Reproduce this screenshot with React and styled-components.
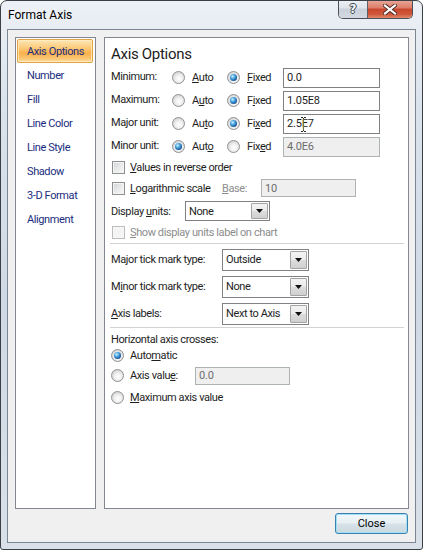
import React from 'react';
import styled, { createGlobalStyle, css } from 'styled-components';

const Global = createGlobalStyle`
  html, body { margin: 0; padding: 0; background: #ffffff; }
  body {
    font-family: Roboto, "Liberation Sans", Arial, sans-serif;
    font-size: 11px;
    letter-spacing: -0.4px;
    color: #1e1e1e;
  }
  * { box-sizing: border-box; }
`;

const Window = styled.div`
  width: 423px;
  height: 550px;
  border: 1px solid #3b3f46;
  border-radius: 7px 7px 3px 3px;
  background: linear-gradient(180deg, #edf1f6 0%, #dbe3ec 18%, #cfd9e5 55%, #d9e0e8 100%);
  display: flex;
  flex-direction: column;
  overflow: hidden;
`;

const TitleBar = styled.div`
  height: 28px;
  flex: none;
  display: flex;
  align-items: flex-start;
  padding-left: 7px;
`;

const Title = styled.div`
  margin-top: 6px;
  font-size: 12px;
  line-height: 16px;
  letter-spacing: 0;
  color: #000;
  text-shadow: 0 0 6px rgba(255, 255, 255, 0.9);
`;

const Caption = styled.div`
  margin-left: auto;
  margin-right: 9px;
  margin-top: -1px;
  display: flex;
  height: 19px;
  border: 1px solid #4a515c;
  border-top: none;
  border-radius: 0 0 5px 5px;
  overflow: hidden;
`;

const CapButton = styled.div`
  width: ${p => p.$w}px;
  height: 100%;
  display: flex;
  align-items: center;
  justify-content: center;
  ${p => p.$close ? css`
    background: linear-gradient(180deg, #e9a99b 0%, #db7c67 45%, #c8452c 50%, #d0583c 80%, #e08a6a 100%);
  ` : css`
    background: linear-gradient(180deg, #eef1f5 0%, #dfe4ea 45%, #c9d0d9 50%, #d3d9e1 100%);
    border-right: 1px solid #5a616b;
  `}
`;

const HelpGlyph = styled.span`
  font-family: "DejaVu Sans", sans-serif;
  font-weight: bold;
  font-size: 12px;
  line-height: 12px;
  color: #f4f6f8;
  letter-spacing: 0;
  text-shadow: -1px 0 #3b4450, 1px 0 #3b4450, 0 -1px #3b4450, 0 1px #3b4450;
`;

const Client = styled.div`
  flex: 1;
  margin: 0 6px 6px 6px;
  border: 1px solid #7b8694;
  background: #f0f0f0;
  display: flex;
  flex-direction: column;
  padding: 7px 6px 8px 7px;
`;

const Body = styled.div`
  height: 472px;
  display: flex;
  gap: 8px;
`;

const Nav = styled.div`
  width: 81px;
  flex: none;
  border: 1px solid #828790;
  background: #ffffff;
  padding: 1px 2px 0 1px;
  display: flex;
  flex-direction: column;
`;

const NavItem = styled.div`
  height: 24px;
  display: flex;
  align-items: center;
  padding-left: 9px;
  border: 1px solid transparent;
  color: #1a2d7e;
  white-space: nowrap;
  ${p => p.$active && css`
    border-color: #e0a446;
    border-radius: 2px;
    background: linear-gradient(180deg, #fde7b6 0%, #fccb7c 35%, #f9b04a 60%, #fbc775 85%, #fde0a8 100%);
    box-shadow: inset 0 0 0 1px rgba(255, 240, 200, 0.7);
  `}
`;

const Panel = styled.div`
  flex: 1;
  position: relative;
  border: 1px solid #828790;
  background: #ffffff;
  padding: 6px 3px 0 6px;
  display: flex;
  flex-direction: column;
`;

const Heading = styled.div`
  font-size: 15px;
  line-height: 20px;
  letter-spacing: -0.3px;
  color: #1c1c1c;
  margin-bottom: 2px;
`;

const OptionGrid = styled.div`
  display: grid;
  grid-template-columns: 61px 55px 56px 97px;
  grid-auto-rows: 23px;
  align-items: center;
`;

const RowLabel = styled.div`
  padding-bottom: ${p => p.$raised ? 3 : 0}px;
  white-space: nowrap;
  color: ${p => p.$disabled ? '#8d8d8d' : '#1e1e1e'};
`;

const Choice = styled.label`
  display: flex;
  align-items: center;
  gap: ${p => p.$gap ?? 7}px;
  white-space: nowrap;
  color: ${p => p.$disabled ? '#8d8d8d' : '#1e1e1e'};
`;

const Radio = styled.span`
  width: 13px;
  height: 13px;
  flex: none;
  border-radius: 50%;
  border: 1px solid #8e9196;
  background: radial-gradient(circle at 55% 60%, #ffffff 0%, #f2f2f2 35%, #d4d4d4 75%, #c6c6c6 100%);
  position: relative;
  ${p => p.$checked && css`
    &::after {
      content: "";
      position: absolute;
      left: 2px;
      top: 2px;
      width: 7px;
      height: 7px;
      border-radius: 50%;
      background: radial-gradient(circle at 38% 35%, #c9f1ff 0%, #4ea6e0 35%, #17589c 70%, #0c2f5c 100%);
    }
  `}
`;

const Check = styled.span`
  width: 13px;
  height: 13px;
  flex: none;
  margin-left: 1px;
  border: 1px solid ${p => p.$disabled ? '#bcbcbc' : '#8e8f8f'};
  background: ${p => p.$disabled
    ? '#f4f4f4'
    : 'linear-gradient(135deg, #cfd2d6 0%, #e8e9ea 50%, #f9f9f9 100%)'};
  box-shadow: inset 0 0 0 1px ${p => p.$disabled ? '#f7f7f7' : '#f4f4f4'};
`;

const Field = styled.input`
  width: ${p => p.$w}px;
  height: ${p => p.$h ?? 20}px;
  margin: 0;
  padding: 0 3px;
  font: inherit;
  letter-spacing: -0.2px;
  border: 1px solid ${p => p.disabled ? '#adb2b5' : '#7f8184'};
  background: ${p => p.disabled ? '#efefef' : '#ffffff'};
  color: ${p => p.disabled ? '#6d6d6d' : '#1e1e1e'};
  outline: none;
  &:disabled { -webkit-text-fill-color: #6d6d6d; opacity: 1; }
`;

const CheckRow = styled.div`
  height: ${p => p.$h}px;
  display: flex;
  align-items: center;
`;

const FieldRow = styled.div`
  height: ${p => p.$h}px;
  display: grid;
  grid-template-columns: ${p => p.$cols};
  align-items: center;
`;

const Separator = styled.div`
  height: 1px;
  margin: ${p => p.$mt}px 0 ${p => p.$mb}px -1px;
  width: 294px;
  background: #d3d3d3;
`;

const GroupTitle = styled.div`
  margin-top: 4px;
  line-height: 15px;
`;

const SelectBox = styled.div`
  width: ${p => p.$w}px;
  height: ${p => p.$h}px;
  border: 1px solid #7f8184;
  background: #ffffff;
  display: flex;
  align-items: center;
  padding: 1px 1px 1px 3px;
`;

const SelectText = styled.span`
  flex: 1;
  white-space: nowrap;
  overflow: hidden;
`;

const DropButton = styled.span`
  width: 17px;
  height: 100%;
  flex: none;
  border: 1px solid #a3a3a3;
  border-radius: 1px;
  background: linear-gradient(180deg, #f4f4f4 0%, #ebebeb 48%, #dcdcdc 52%, #d0d0d0 100%);
  display: flex;
  align-items: center;
  justify-content: center;
`;

const Footer = styled.div`
  margin-top: 4px;
  display: flex;
  justify-content: flex-end;
  padding-right: 1px;
`;

const Button = styled.button`
  width: 73px;
  height: 21px;
  margin: 0;
  padding: 0;
  font: inherit;
  letter-spacing: 0;
  color: #000;
  border: 1px solid #3c7fb1;
  border-radius: 3px;
  background: linear-gradient(180deg, #f2f8fb 0%, #e7eff3 48%, #d6e2e8 52%, #cbd9e0 100%);
  box-shadow: inset 0 0 0 1px #9fe0f7;
`;

const IBeam = styled.svg`
  position: absolute;
  left: 195px;
  top: 78px;
  pointer-events: none;
`;

const Arrow = () => (
  <svg width="7" height="4" viewBox="0 0 7 4"><path d="M0 0h7L3.5 4z" fill="#111" /></svg>
);

const U = styled.u`
  text-decoration: underline;
  text-underline-offset: 1px;
`;

function Lbl({ text, k }) {
  if (k == null) return <span>{text}</span>;
  return <span>{text.slice(0, k)}<U>{text[k]}</U>{text.slice(k + 1)}</span>;
}

const navItems = ['Axis Options', 'Number', 'Fill', 'Line Color', 'Line Style', 'Shadow', '3-D Format', 'Alignment'];

const bounds = [
  { label: 'Minimum:', key: 0, mode: 'fixed', value: '0.0' },
  { label: 'Maximum:', key: 1, mode: 'fixed', value: '1.05E8' },
  { label: 'Major unit:', key: 2, mode: 'fixed', value: '2.5E7' },
  { label: 'Minor unit:', key: 3, mode: 'auto', value: '4.0E6' },
];

const selects = [
  { label: 'Major tick mark type:', k: null, value: 'Outside' },
  { label: 'Minor tick mark type:', k: 1, value: 'None' },
  { label: 'Axis labels:', k: 0, value: 'Next to Axis' },
];

function Select({ w, h, value }) {
  return (
    <SelectBox $w={w} $h={h}>
      <SelectText>{value}</SelectText>
      <DropButton><Arrow /></DropButton>
    </SelectBox>
  );
}

export default function App() {
  return (
    <>
      <Global />
      <Window>
        <TitleBar>
          <Title>Format Axis</Title>
          <Caption>
            <CapButton $w={29}><HelpGlyph>?</HelpGlyph></CapButton>
            <CapButton $w={44} $close>
              <svg width="14" height="11" viewBox="0 0 14 11">
                <path d="M2 1.5L12 9.5M12 1.5L2 9.5" stroke="#4a2a24" strokeWidth="4" strokeLinecap="square" />
                <path d="M2 1.5L12 9.5M12 1.5L2 9.5" stroke="#ffffff" strokeWidth="2.2" strokeLinecap="square" />
              </svg>
            </CapButton>
          </Caption>
        </TitleBar>
        <Client>
          <Body>
            <Nav>
              {navItems.map((n, i) => (
                <NavItem key={n} $active={i === 0}>{n}</NavItem>
              ))}
            </Nav>
            <Panel>
              <Heading>Axis Options</Heading>
              <OptionGrid>
                {bounds.map(b => (
                  <React.Fragment key={b.label}>
                    <RowLabel $raised>{b.label}</RowLabel>
                    <Choice><Radio $checked={b.mode === 'auto'} /><Lbl text="Auto" k={b.key} /></Choice>
                    <Choice><Radio $checked={b.mode === 'fixed'} /><Lbl text="Fixed" k={b.key} /></Choice>
                    <Field $w={97} value={b.value} readOnly disabled={b.mode === 'auto'} />
                  </React.Fragment>
                ))}
              </OptionGrid>
              <CheckRow $h={19}>
                <Choice $gap={5}><Check /><Lbl text="Values in reverse order" k={0} /></Choice>
              </CheckRow>
              <FieldRow $h={22} $cols="111px 39px 95px">
                <Choice $gap={5}><Check /><Lbl text="Logarithmic scale" k={0} /></Choice>
                <RowLabel $disabled><Lbl text="Base:" k={0} /></RowLabel>
                <Field $w={95} $h={18} value="10" readOnly disabled />
              </FieldRow>
              <FieldRow $h={24} $cols="74px 85px">
                <RowLabel><Lbl text="Display units:" k={8} /></RowLabel>
                <Select w={85} h={20} value="None" />
              </FieldRow>
              <CheckRow $h={18}>
                <Choice $gap={5} $disabled><Check $disabled /><Lbl text="Show display units label on chart" k={0} /></Choice>
              </CheckRow>
              <Separator $mt={2} $mb={2} />
              {selects.map(s => (
                <FieldRow key={s.label} $h={27} $cols="111px 87px">
                  <RowLabel><Lbl text={s.label} k={s.k} /></RowLabel>
                  <Select w={87} h={22} value={s.value} />
                </FieldRow>
              ))}
              <Separator $mt={0} $mb={0} />
              <GroupTitle>Horizontal axis crosses:</GroupTitle>
              <CheckRow $h={17}>
                <Choice $gap={6}><Radio $checked /><Lbl text="Automatic" k={4} /></Choice>
              </CheckRow>
              <FieldRow $h={23} $cols="84px 95px">
                <Choice $gap={6}><Radio /><Lbl text="Axis value:" k={9} /></Choice>
                <Field $w={95} $h={18} value="0.0" readOnly disabled />
              </FieldRow>
              <CheckRow $h={20}>
                <Choice $gap={6}><Radio /><Lbl text="Maximum axis value" k={0} /></Choice>
              </CheckRow>
              <IBeam width="7" height="17" viewBox="0 0 7 17">
                <path d="M1 1.5h2M4 1.5h2M3.5 2v13M1 15.5h2M4 15.5h2" stroke="#2b2b2b" strokeWidth="1" fill="none" />
                <path d="M3 3v11" stroke="#e8e07a" strokeWidth="0.8" />
              </IBeam>
            </Panel>
          </Body>
          <Footer>
            <Button>Close</Button>
          </Footer>
        </Client>
      </Window>
    </>
  );
}
